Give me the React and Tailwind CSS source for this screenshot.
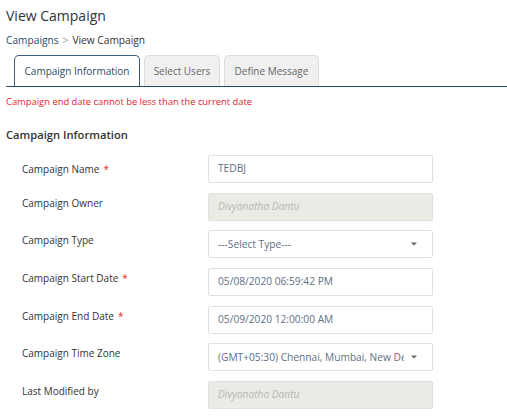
import React from "react";

function Caret() {
  return (
    <svg width="6" height="4" viewBox="0 0 6 4" className="shrink-0">
      <path d="M0 0.5 H6 L3 3.5 Z" fill="#666" />
    </svg>
  );
}

function Row({ label, required, labelPt = "pt-[3px]", children }) {
  return (
    <div className="flex items-start h-[37.7px]">
      <div className={`w-[186px] shrink-0 text-[10px] text-[#333] leading-[14px] ${labelPt}`}>
        {label}
        {required && <span className="text-[#e02b2b] ml-[4px]">*</span>}
      </div>
      {children}
    </div>
  );
}

function Input({ value, disabled, select }) {
  return (
    <div
      className={`w-[225px] h-[28px] rounded-[2px] border border-[#e0e0e0] flex items-center gap-[7px] pl-[9px] pr-[15px] text-[10.2px] overflow-hidden whitespace-nowrap ${
        disabled ? "bg-[#ebebe6] italic text-[#b7b7b2]" : "bg-white text-[#5e6f84]"
      }`}
    >
      <span className="flex-1 overflow-hidden">{value}</span>
      {select && <Caret />}
    </div>
  );
}

function Tab({ active, w, children }) {
  return (
    <div
      className={`${w} h-[31px] border border-b-0 rounded-t-[5px] flex items-center justify-center text-[10px] whitespace-nowrap ${
        active ? "border-[#3a6285] bg-white text-[#2d4a66]" : "border-[#dcdcdc] bg-[#f0f0f0] text-[#666]"
      }`}
    >
      {children}
    </div>
  );
}

export default function App() {
  return (
    <div className="w-[507px] h-[417px] bg-white overflow-hidden font-['Open_Sans',sans-serif]">
      <div className="pl-[6px]">
        <h1 className="text-[14px] text-[#333] leading-[20px] pt-[6px]">View Campaign</h1>
        <div className="text-[10.2px] leading-[14px] mt-[7px] text-[#333]">
          <span className="text-[#2d4c6b]">Campaigns</span>
          <span className="text-[#999] mx-[4px]">&gt;</span>
          <span>View Campaign</span>
        </div>
        <div className="flex items-end border-b border-[#1f4b70] pl-[8px] mt-[8px] h-[32px] gap-[4px]">
          <Tab active w="w-[126px]">Campaign Information</Tab>
          <Tab w="w-[76px]">Select Users</Tab>
          <Tab w="w-[95px]">Define Message</Tab>
        </div>
        <div className="text-[9.4px] text-[#e0262f] leading-[14px] mt-[8px]">
          Campaign end date cannot be less than the current date
        </div>
        <h2 className="text-[11.2px] font-semibold text-[#333] leading-[16px] mt-[18px]">
          Campaign Information
        </h2>
        <div className="pl-[16px] mt-[12px]">
          <Row label="Campaign Name" required labelPt="pt-[7px]">
            <Input value="TEDBJ" />
          </Row>
          <Row label="Campaign Owner">
            <Input value="Divyanatha Dantu" disabled />
          </Row>
          <Row label="Campaign Type">
            <Input value="---Select Type---" select />
          </Row>
          <Row label="Campaign Start Date" required>
            <Input value="05/08/2020 06:59:42 PM" />
          </Row>
          <Row label="Campaign End Date" required>
            <Input value="05/09/2020 12:00:00 AM" />
          </Row>
          <Row label="Campaign Time Zone">
            <Input value="(GMT+05:30) Chennai, Mumbai, New Delhi" select />
          </Row>
          <Row label="Last Modified by">
            <Input value="Divyanatha Dantu" disabled />
          </Row>
        </div>
      </div>
    </div>
  );
}
